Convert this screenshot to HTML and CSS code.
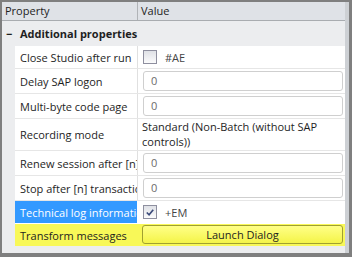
FILE: index.html
```html
<!DOCTYPE html>
<html>
<head>
<meta charset="utf-8">
<link rel="stylesheet" href="styles.css">
</head>
<body>
<div class="frame">
  <div class="main">
    <div class="header">
      <div class="h-name">Property</div>
      <div class="h-value">Value</div>
    </div>
    <div class="category"><span class="toggle">−</span><span>Additional properties</span></div>
    <div class="rows">
      <div class="row row-check">
        <div class="name">Close Studio after run</div>
        <div class="value"><span class="check"></span><span class="tag">#AE</span></div>
      </div>
      <div class="row">
        <div class="name">Delay SAP logon</div>
        <div class="value"><div class="textbox">0</div></div>
      </div>
      <div class="row">
        <div class="name">Multi-byte code page</div>
        <div class="value"><div class="textbox">0</div></div>
      </div>
      <div class="row row-tall">
        <div class="name">Recording mode</div>
        <div class="value text">Standard (Non-Batch (without SAP<br>controls))</div>
      </div>
      <div class="row">
        <div class="name">Renew session after [n]</div>
        <div class="value"><div class="textbox">0</div></div>
      </div>
      <div class="row">
        <div class="name">Stop after [n] transactions</div>
        <div class="value"><div class="textbox">0</div></div>
      </div>
      <div class="row row-check selected">
        <div class="name">Technical log information</div>
        <div class="value"><span class="check checked"><svg viewBox="0 0 13 13" width="13" height="13"><path d="M3 6.5 L5.5 9 L10 3.5" fill="none" stroke="#3b4a7a" stroke-width="1.8"/></svg></span><span class="tag">+EM</span></div>
      </div>
      <div class="row highlight">
        <div class="name">Transform messages</div>
        <div class="value"><div class="button">Launch Dialog</div></div>
      </div>
    </div>
  </div>
  <div class="strip"></div>
</div>
</body>
</html>
```

FILE: styles.css
```css
html, body {
  margin: 0;
  padding: 0;
}
body {
  width: 352px;
  height: 257px;
  font-family: "Open Sans", "Noto Sans", sans-serif;
  font-size: 11px;
  color: #1e1e1e;
  overflow: hidden;
}
.frame {
  box-sizing: border-box;
  width: 352px;
  height: 257px;
  border: 2px solid #7f7f7f;
  border-right-width: 3px;
  border-bottom-width: 4px;
  display: flex;
  background: #ecedef;
}
.main {
  flex: 1;
  display: flex;
  flex-direction: column;
  min-width: 0;
}
.strip {
  width: 4px;
  background: #cdd0d4;
}
.header {
  display: flex;
  height: 18px;
  background: #dfe2e7;
  border-bottom: 1px solid #a9acb0;
}
.h-name {
  width: 132px;
  padding-left: 3px;
  border-right: 1px solid #b0b3b7;
  line-height: 18px;
}
.h-value {
  padding-left: 3px;
  line-height: 18px;
}
.category {
  height: 25px;
  display: flex;
  align-items: center;
  font-weight: bold;
  background: #ecedef;
}
.toggle {
  width: 18px;
  padding-left: 4px;
  box-sizing: border-box;
}
.rows {
  margin-left: 13px;
  display: flex;
  flex-direction: column;
}
.row {
  display: flex;
  background: #fff;
  border-bottom: 1px solid #e6e6e6;
  min-height: 24px;
}
.row-check {
  min-height: 22px;
}
.row-tall {
  min-height: 31px;
}
.name {
  width: 117px;
  padding-left: 5px;
  border-right: 1px solid #e0e0e0;
  white-space: nowrap;
  overflow: hidden;
  display: flex;
  align-items: center;
}
.value {
  flex: 1;
  display: flex;
  align-items: center;
  padding: 2px 2px 2px 5px;
}
.value.text {
  line-height: 15px;
  padding: 0 2px 1px 4px;
}
.textbox {
  flex: 1;
  box-sizing: border-box;
  height: 20px;
  border: 1px solid #cfcfcf;
  border-radius: 3px;
  padding-left: 7px;
  line-height: 18px;
  color: #6b6b6b;
}
.check {
  box-sizing: border-box;
  width: 14px;
  height: 14px;
  border: 1px solid #8e8f9f;
  background: linear-gradient(#dfe1e6, #fbfbfc);
  margin-right: 8px;
  display: flex;
}
.tag {
  color: #444;
}
.selected {
  border-bottom-color: #fff;
}
.selected .name {
  background: #3399ff;
  color: #fff;
  border-right-color: #fff;
}
.highlight {
  background: #f8f858;
  border-bottom: none;
  min-height: 22px;
}
.highlight .name {
  border-right: 1px solid #f8f858;
}
.highlight .value {
  padding: 1px 2px 2px 4px;
}
.button {
  flex: 1;
  box-sizing: border-box;
  height: 19px;
  border: 1px solid #a0a030;
  border-radius: 3px;
  background: linear-gradient(#ffff88, #f4f448);
  text-align: center;
  line-height: 17px;
  color: #1e1e1e;
}
```
